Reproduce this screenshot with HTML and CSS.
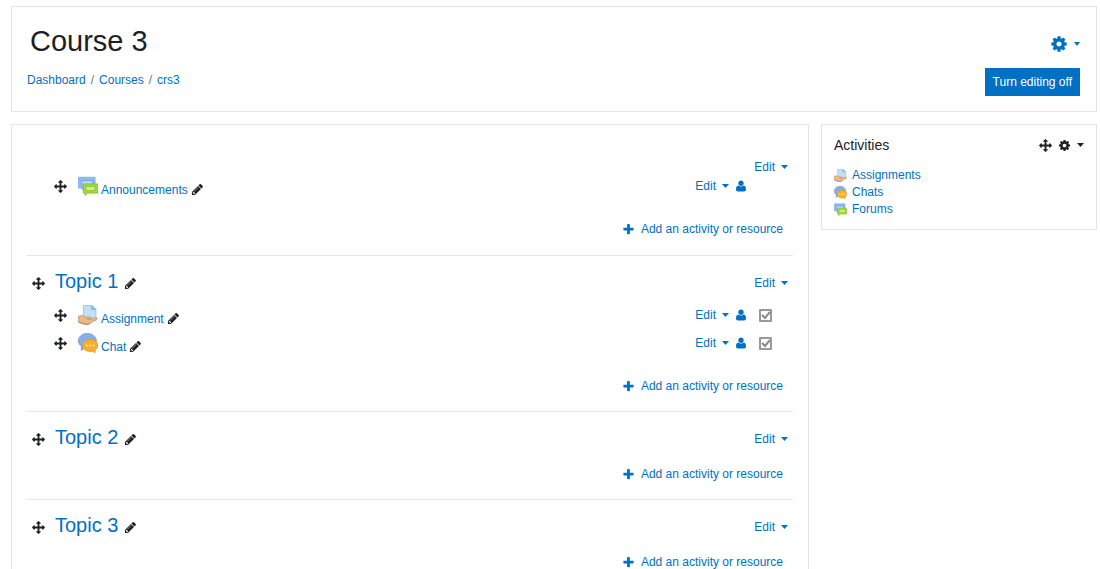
FILE: index.html
```html
<!DOCTYPE html>
<html lang="en">
<head>
    <meta charset="UTF-8">
    <meta name="viewport" content="width=device-width, initial-scale=1.0">
    <title>Course 3</title>
    <link rel="stylesheet" href="styles.css">
</head>
<body>
    <!-- Icon set -->
    <svg class="sprite" aria-hidden="true">
        <symbol id="move" viewBox="0 0 1792 1792"><path d="M1792 896q0 26-19 45l-256 256q-19 19-45 19t-45-19-19-45v-128h-384v384h128q26 0 45 19t19 45-19 45l-256 256q-19 19-45 19t-45-19l-256-256q-19-19-19-45t19-45 45-19h128v-384h-384v128q0 26-19 45t-45 19-45-19l-256-256q-19-19-19-45t19-45l256-256q19-19 45-19t45 19 19 45v128h384v-384h-128q-26 0-45-19t-19-45 19-45l256-256q19-19 45-19t45 19l256 256q19 19 19 45t-19 45-45 19h-128v384h384v-128q0-26 19-45t45-19 45 19l256 256q19 19 19 45z"/></symbol>
        <symbol id="cog" viewBox="0 0 1792 1792"><path d="M1152 896q0-106-75-181t-181-75-181 75-75 181 75 181 181 75 181-75 75-181zm512-109v222q0 12-8 23t-20 13l-185 28q-19 54-39 91 35 50 107 138 10 12 10 25t-9 23q-27 37-99 108t-94 71q-12 0-26-9l-138-108q-44 23-91 38-16 136-29 186-7 28-36 28h-222q-14 0-24.5-8.5t-11.5-21.5l-28-184q-49-16-90-37l-141 107q-10 9-25 9-14 0-25-11-126-114-165-168-7-10-7-23 0-12 8-23 15-21 51-66.5t54-70.5q-27-50-41-99l-183-27q-13-2-21-12.5t-8-23.5v-222q0-12 8-23t19-13l186-28q14-46 39-92-40-57-107-138-10-12-10-24 0-10 9-23 26-36 98.5-107.5t94.5-71.5q13 0 26 10l138 107q44-23 91-38 16-136 29-186 7-28 36-28h222q14 0 24.5 8.5t11.5 21.5l28 184q49 16 90 37l142-107q9-9 24-9 13 0 25 10 129 119 165 170 7 8 7 22 0 12-8 23-15 21-51 66.5t-54 70.5q26 50 41 98l183 28q13 2 21 12.5t8 23.5z"/></symbol>
        <symbol id="pencil" viewBox="0 0 1792 1792"><path d="M491 1536l91-91-235-235-91 91v107h128v128h107zm523-928q0-22-22-22-10 0-17 7l-542 542q-7 7-7 17 0 22 22 22 10 0 17-7l542-542q7-7 7-17zm-54-192l416 416-832 832h-416v-416zm683 96q0 53-37 90l-166 166-416-416 166-165q36-38 90-38 53 0 91 38l235 234q37 39 37 91z"/></symbol>
        <symbol id="plus" viewBox="0 0 1792 1792"><path d="M1600 736v192q0 40-28 68t-68 28h-416v416q0 40-28 68t-68 28h-192q-40 0-68-28t-28-68v-416h-416q-40 0-68-28t-28-68v-192q0-40 28-68t68-28h416v-416q0-40 28-68t68-28h192q40 0 68 28t28 68v416h416q40 0 68 28t28 68z"/></symbol>
        <symbol id="user" viewBox="192 128 1408 1536"><path d="M1600 1405q0 120-73 189.5t-194 69.5h-874q-121 0-194-69.5t-73-189.5q0-53 3.5-103.5t14-109 26.5-108.5 43-97.5 62-81 85.5-53.5 111.5-20q9 0 42 21.5t74.5 48 108 48 133.5 21.5 133.5-21.5 108-48 74.5-48 42-21.5q61 0 111.5 20t85.5 53.5 62 81 43 97.5 26.5 108.5 14 109 3.5 103.5zm-320-893q0 159-112.5 271.5t-271.5 112.5-271.5-112.5-112.5-271.5 112.5-271.5 271.5-112.5 271.5 112.5 112.5 271.5z"/></symbol>
        <symbol id="forum" viewBox="0 0 24 24">
            <path d="M.5 1.500h20v13h-13v4l-4-4h-3z" fill="#8fb9f0" stroke="#7eaae6"/>
            <path d="M4.500 5.500h13v6h-13z" fill="#b9d6fb" stroke="#6f9fe0"/>
            <path d="M6.500 9.500h17v11h-12l-3 3v-3h-2z" fill="#a4d83c" stroke="#86be22"/>
            <path d="M9.500 12.500h11v5h-11z" fill="#d2f08a" stroke="#8cc52a"/>
        </symbol>
        <symbol id="assign" viewBox="0 0 24 24">
            <path d="M6.500 .5h10l5 5v13h-15z" fill="#c0e0fa" stroke="#8fbfe9"/>
            <path d="M16.500 .5v5h5z" fill="#8dbff0" stroke="#7db1e6"/>
            <path d="M.500 13.500l5-1 4 2h5c2 0 2 2.500 0 2.500h-4 5l6-2c2 0 2 1.500 1 2l-8 5c-3 1.500-6 1-9 0l-5-1.500z" fill="#e9b98c" stroke="#c99668"/>
            <path d="M1 20.500l5 2c3 1 6 1 8 0" fill="none" stroke="#a4744c"/>
        </symbol>
        <symbol id="chat" viewBox="0 0 24 24">
            <path d="M11 .5c6 0 11 4 11 9s-5 9-11 9c-1 0-2 0-3-.500l-4 3v-5c-2-1.500-3.500-4-3.500-6.500 0-5 4.500-9 10.500-9z" fill="#82b0ee" stroke="#6d9be0"/>
            <path d="M14.500 7.500c5 0 9 3.500 9 7.500 0 2.500-1.500 4.500-3 5.500v3l-3-1.500h-3c-5 0-9-3-9-7s4-7.500 9-7.500z" fill="#fcae2e" stroke="#e8921c"/>
            <path d="M9.500 14h2v2h-2zm4 0h2v2h-2zm4 0h2v2h-2z" fill="#fff3cf"/>
        </symbol>
    </svg>

    <header class="card page-header">
        <div>
            <h1>Course 3</h1>
            <nav aria-label="Breadcrumb">
                <ol class="breadcrumb">
                    <li><a href="#">Dashboard</a></li>
                    <li><a href="#">Courses</a></li>
                    <li><a href="#">crs3</a></li>
                </ol>
            </nav>
        </div>
        <div class="header-actions">
            <button type="button" class="menu" aria-label="Course settings"><svg class="icon icon-lg"><use href="#cog"/></svg><span class="caret caret-sm"></span></button>
            <button type="button" class="edit-mode">Turn editing off</button>
        </div>
    </header>

    <div class="container">
        <main class="card content">
            <section class="topic general">
                <div class="topic-header">
                    <button type="button" class="menu edit-menu">Edit<span class="caret"></span></button>
                </div>
                <ul class="activities">
                    <li>
                        <svg class="icon"><use href="#move"/></svg>
                        <svg class="mod-icon"><use href="#forum"/></svg>
                        <span class="mod-name"><a href="#">Announcements</a> <svg class="icon"><use href="#pencil"/></svg></span>
                        <div class="actions">
                            <button type="button" class="menu">Edit<span class="caret"></span></button>
                            <svg class="user"><use href="#user"/></svg>
                        </div>
                    </li>
                </ul>
                <a href="#" class="add-activity"><svg class="icon"><use href="#plus"/></svg>Add an activity or resource</a>
            </section>

            <section class="topic">
                <div class="topic-header">
                    <svg class="icon"><use href="#move"/></svg>
                    <h2><a href="#">Topic 1</a></h2>
                    <svg class="icon"><use href="#pencil"/></svg>
                    <button type="button" class="menu edit-menu">Edit<span class="caret"></span></button>
                </div>
                <ul class="activities">
                    <li>
                        <svg class="icon"><use href="#move"/></svg>
                        <svg class="mod-icon"><use href="#assign"/></svg>
                        <span class="mod-name"><a href="#">Assignment</a> <svg class="icon"><use href="#pencil"/></svg></span>
                        <div class="actions">
                            <button type="button" class="menu">Edit<span class="caret"></span></button>
                            <svg class="user"><use href="#user"/></svg>
                            <input type="checkbox" class="completion" aria-label="Assignment completed" checked>
                        </div>
                    </li>
                    <li>
                        <svg class="icon"><use href="#move"/></svg>
                        <svg class="mod-icon"><use href="#chat"/></svg>
                        <span class="mod-name"><a href="#">Chat</a> <svg class="icon"><use href="#pencil"/></svg></span>
                        <div class="actions">
                            <button type="button" class="menu">Edit<span class="caret"></span></button>
                            <svg class="user"><use href="#user"/></svg>
                            <input type="checkbox" class="completion" aria-label="Chat completed" checked>
                        </div>
                    </li>
                </ul>
                <a href="#" class="add-activity"><svg class="icon"><use href="#plus"/></svg>Add an activity or resource</a>
            </section>

            <section class="topic">
                <div class="topic-header">
                    <svg class="icon"><use href="#move"/></svg>
                    <h2><a href="#">Topic 2</a></h2>
                    <svg class="icon"><use href="#pencil"/></svg>
                    <button type="button" class="menu edit-menu">Edit<span class="caret"></span></button>
                </div>
                <a href="#" class="add-activity"><svg class="icon"><use href="#plus"/></svg>Add an activity or resource</a>
            </section>

            <section class="topic">
                <div class="topic-header">
                    <svg class="icon"><use href="#move"/></svg>
                    <h2><a href="#">Topic 3</a></h2>
                    <svg class="icon"><use href="#pencil"/></svg>
                    <button type="button" class="menu edit-menu">Edit<span class="caret"></span></button>
                </div>
                <a href="#" class="add-activity"><svg class="icon"><use href="#plus"/></svg>Add an activity or resource</a>
            </section>
        </main>

        <aside class="card block">
            <div class="block-header">
                <h3>Activities</h3>
                <svg class="icon"><use href="#move"/></svg>
                <button type="button" class="menu block-menu" aria-label="Block actions"><svg class="icon"><use href="#cog"/></svg><span class="caret"></span></button>
            </div>
            <ul class="block-list">
                <li><a href="#"><svg class="block-icon"><use href="#assign"/></svg>Assignments</a></li>
                <li><a href="#"><svg class="block-icon"><use href="#chat"/></svg>Chats</a></li>
                <li><a href="#"><svg class="block-icon"><use href="#forum"/></svg>Forums</a></li>
            </ul>
        </aside>
    </div>
</body>
</html>
```
FILE: styles.css
```css
* {
    box-sizing: border-box;
}

body {
    font-family: "Liberation Sans", Arial, sans-serif;
    font-size: 12px;
    line-height: 18px;
    margin: 0;
    padding: 6px 3px 0 11px;
    color: #1d2125;
    background-color: #fff;
}

h1, h2, h3, ul, ol {
    margin: 0;
    padding: 0;
    font-weight: normal;
    list-style: none;
}

a {
    color: #0070c4;
    text-decoration: none;
}

a:hover {
    text-decoration: underline;
}

button {
    font: inherit;
    border: none;
    cursor: pointer;
}

.sprite {
    display: none;
}

.icon {
    width: 13px;
    height: 13px;
    flex: none;
    fill: currentColor;
}

.icon-lg {
    width: 18px;
    height: 18px;
}

.card {
    border: 1px solid #e3e5e7;
    background-color: #fff;
}

.menu {
    display: flex;
    align-items: center;
    gap: 6px;
    padding: 0;
    color: #0070c4;
    background: none;
}

.caret {
    width: 7px;
    height: 4px;
    background-color: currentColor;
    clip-path: polygon(0 0, 100% 0, 50% 100%);
}

.caret-sm {
    width: 6px;
}

/* Page header */
.page-header {
    display: flex;
    justify-content: space-between;
    padding: 16px 16px 15px 15px;
    margin-bottom: 12px;
}

.page-header h1 {
    font-size: 29px;
    line-height: 36px;
    padding-left: 3px;
}

.breadcrumb {
    display: flex;
    margin-top: 12px;
}

.breadcrumb li + li::before {
    content: "/";
    padding: 0 5px;
    color: #6c757d;
}

.header-actions {
    display: flex;
    flex-direction: column;
    align-items: flex-end;
    gap: 15px;
    padding-top: 12px;
}

.edit-mode {
    padding: 5px 8px;
    color: #fff;
    background-color: #0070c4;
}

/* Columns */
.container {
    display: grid;
    grid-template-columns: 1fr 276px;
    gap: 12px;
    align-items: start;
}

.content {
    padding: 0 15px;
}

/* Topics */
.topic {
    display: flex;
    flex-direction: column;
    padding: 9px 0 16px;
    border-bottom: 1px solid #e3e5e7;
}

.topic:last-child {
    border-bottom: none;
}

.topic-header {
    display: flex;
    align-items: center;
    height: 36px;
    padding: 0 5px;
}

.topic-header h2 {
    font-size: 20px;
    line-height: 24px;
    margin: 0 6px 5px 10px;
}

.edit-menu {
    margin-left: auto;
}

.general {
    padding: 33px 0 17px;
}

.general .topic-header {
    height: 18px;
    margin-bottom: -4px;
}

.activities {
    padding: 0 0 12px;
}

.activities li {
    display: flex;
    align-items: center;
    height: 28px;
    padding: 0 21px 0 27px;
}

.mod-icon {
    width: 20px;
    height: 20px;
    margin: 0 3px 0 11px;
}

.mod-name {
    display: flex;
    align-items: center;
    gap: 3px;
    margin-top: 7px;
}

.actions {
    display: grid;
    grid-template-columns: auto 10px 19px;
    align-items: center;
    column-gap: 7px;
    margin-left: auto;
}

.user {
    width: 10px;
    height: 12px;
    fill: #0070c4;
}

.completion {
    justify-self: end;
    appearance: none;
    width: 13px;
    height: 13px;
    margin: 0;
    border: 2px solid #999;
    border-radius: 1px;
}

.completion:checked {
    background: url("data:image/svg+xml,%3Csvg xmlns='http://www.w3.org/2000/svg' viewBox='0 0 13 13'%3E%3Cpath d='M3 6L6 9L11 3' fill='none' stroke='%23888' stroke-width='2'/%3E%3C/svg%3E") border-box;
}

.add-activity {
    display: flex;
    align-items: center;
    align-self: flex-end;
    gap: 6px;
    margin: 8px 10px 0 0;
}

/* Side block */
.block {
    padding: 11px 12px;
}

.block-header {
    display: flex;
    align-items: center;
    margin-bottom: 13px;
}

.block-header h3 {
    font-size: 14px;
    margin-right: auto;
}

.block-menu {
    margin-left: 6px;
    color: #1d2125;
}

.block-list li {
    line-height: 17px;
}

.block-list a {
    display: flex;
    align-items: center;
    gap: 5px;
}

.block-icon {
    width: 13px;
    height: 13px;
}
```
